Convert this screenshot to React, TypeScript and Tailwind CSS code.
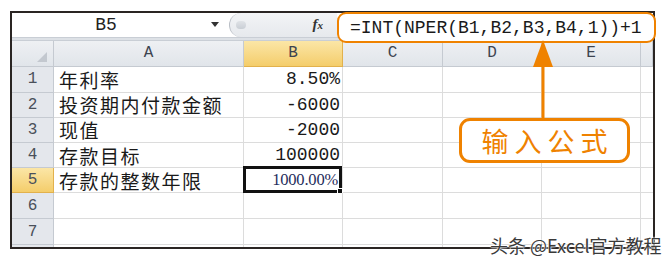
import React from "react";

const mono = { fontFamily: '"Liberation Mono", "DejaVu Sans Mono", monospace' };
const cjk = { fontFamily: '"Noto Sans CJK SC", "Noto Sans", sans-serif' };

const rows: { n: string; a: string; b: string; h: string }[] = [
  { n: "1", a: "年利率", b: "8.50%", h: "h-[26px]" },
  { n: "2", a: "投资期内付款金额", b: "-6000", h: "h-[25px]" },
  { n: "3", a: "现值", b: "-2000", h: "h-[26px]" },
  { n: "4", a: "存款目标", b: "100000", h: "h-[25px]" },
  { n: "5", a: "存款的整数年限", b: "", h: "h-[25px]" },
  { n: "6", a: "", b: "", h: "h-[26px]" },
  { n: "7", a: "", b: "", h: "h-[26px]" },
];

const cols = "grid grid-cols-[42px_190px_99px_100px_99px_99px_12px]";

export default function App() {
  return (
    <div className="relative w-[670px] h-[264px] bg-white overflow-hidden">
      <div className="pt-[11px] pl-[10px]">
        <div className="w-[645px] h-[238px] border-2 border-[#2a2523] flex flex-col overflow-hidden bg-white">
          {/* formula bar */}
          <div className="h-[24px] flex items-stretch">
            <div className="w-[188px] flex items-center justify-center text-[18px] leading-none text-[#222]" style={mono}>
              B5
            </div>
            <div className="w-[29px] flex items-center justify-center">
              <div className="w-0 h-0 border-l-[4px] border-r-[4px] border-t-[5px] border-l-transparent border-r-transparent border-t-[#333]" />
            </div>
            <div className="flex-1 flex items-center bg-gradient-to-b from-[#f3f4f6] to-[#e6e9ed] rounded-l-[12px] border-l border-[#b9bec5] pl-[6px]">
              <div className="w-[10px] h-[8px] rounded-full bg-gradient-to-b from-[#e0e3e7] to-[#c9ced5]" />
              <div className="flex-1" />
              <span className="mr-[14px] text-[15px] leading-none italic font-bold text-[#333]" style={{ fontFamily: '"Liberation Serif", serif' }}>
                f<span className="text-[11px]">x</span>
              </span>
            </div>
            <div className="w-[316px] bg-white" />
          </div>
          {/* band */}
          <div className="h-[4px] bg-[#dde1e6] border-y border-[#c9ced5]" />
          {/* header row */}
          <div className={`${cols} h-[26px] text-[16px] leading-none text-[#3d4450]`} style={mono}>
            <div className="relative bg-gradient-to-b from-[#eef0f3] to-[#e1e5ea] border-r border-b border-[#c5cad1]">
              <div className="absolute right-[6px] bottom-[4px] w-0 h-0 border-l-[10px] border-b-[10px] border-l-transparent border-b-[#c3c8cf]" />
            </div>
            {["A", "B", "C", "D", "E", ""].map((c) => (
              <div
                key={c || "f"}
                className={
                  c === "B"
                    ? "bg-gradient-to-b from-[#fbe6a6] to-[#f4cd6a] border-r border-b border-[#e2b14c] flex items-center justify-center"
                    : "bg-gradient-to-b from-[#eef0f3] to-[#e1e5ea] border-r border-b border-[#c5cad1] flex items-center justify-center"
                }
              >
                {c}
              </div>
            ))}
          </div>
          {/* rows */}
          {rows.map((r) => (
            <div key={r.n} className={`${cols} ${r.h}`}>
              <div
                className={
                  r.n === "5"
                    ? "bg-gradient-to-b from-[#fbe6a6] to-[#f4cd6a] border-r border-b border-[#e2b14c] flex items-center justify-center text-[16px] leading-none text-[#4a505a]"
                    : "bg-[#e4e7ec] border-r border-b border-[#c5cad1] flex items-center justify-center text-[16px] leading-none text-[#4a505a]"
                }
                style={mono}
              >
                {r.n}
              </div>
              <div className="border-r border-b border-[#dcdcdc] flex items-center pl-[5px] text-[19px] tracking-[1.5px] text-[#1a1a1a] leading-none" style={cjk}>
                {r.a}
              </div>
              <div className="relative border-r border-b border-[#dcdcdc] flex items-center justify-end pr-[2px] text-[18px] leading-none text-[#1a1a1a]" style={mono}>
                {r.b}
                {r.n === "5" && (
                  <div className="absolute -left-[1px] -top-[2px] w-[99px] h-[27px] border-[3px] border-[#111] flex items-center justify-end pr-[1px] bg-white">
                    <span className="text-[16.5px] leading-none text-[#1f2d5c] tracking-[-0.2px]" style={{ fontFamily: '"Liberation Serif", serif' }}>
                      1000.00%
                    </span>
                    <div className="absolute -right-[4px] -bottom-[4px] w-[6px] h-[6px] bg-[#111] border border-white" />
                  </div>
                )}
              </div>
              <div className="border-r border-b border-[#dcdcdc]" />
              <div className="border-r border-b border-[#dcdcdc]" />
              <div className="border-r border-b border-[#dcdcdc]" />
              <div className="border-b border-[#dcdcdc]" />
            </div>
          ))}
          <div className={`${cols} h-[2px]`}>
            <div className="bg-[#e4e7ec] border-r border-[#c5cad1]" />
            <div className="border-r border-[#dcdcdc]" />
            <div className="border-r border-[#dcdcdc]" />
            <div className="border-r border-[#dcdcdc]" />
            <div className="border-r border-[#dcdcdc]" />
            <div className="border-r border-[#dcdcdc]" />
            <div />
          </div>
        </div>
      </div>

      {/* formula box highlight */}
      <div
        className="absolute left-[337px] top-[12px] w-[319px] h-[31px] border-2 border-[#ef8200] rounded-[9px] bg-white flex items-center pl-[11px] text-[18px] leading-none text-[#1a1a1a] whitespace-nowrap"
        style={mono}
      >
        =INT(NPER(B1,B2,B3,B4,1))+1
      </div>

      {/* arrow */}
      <svg className="absolute left-[530px] top-[40px]" width="26" height="80" viewBox="0 0 26 80">
        <polygon points="13,0 3,27 23,27" fill="#ef8200" />
        <rect x="11.5" y="26" width="3" height="54" fill="#ef8200" />
      </svg>

      {/* callout */}
      <div
        className="absolute left-[459px] top-[118px] w-[171px] h-[45px] border-[3px] border-[#ef8200] rounded-[11px] bg-white flex items-center justify-center text-[27px] leading-none tracking-[6px] text-[#ef8200]"
        style={cjk}
      >
        <span className="pl-[6px]">输入公式</span>
      </div>

      {/* watermark */}
      <div
        className="absolute left-[490px] top-[236px] text-[18px] leading-none text-[#3a3a3a] whitespace-nowrap"
        style={{ ...cjk, textShadow: "0 0 2px #fff, 0 0 2px #fff, 0 0 1px #fff" }}
      >
        头条 @Excel官方教程
      </div>
    </div>
  );
}
